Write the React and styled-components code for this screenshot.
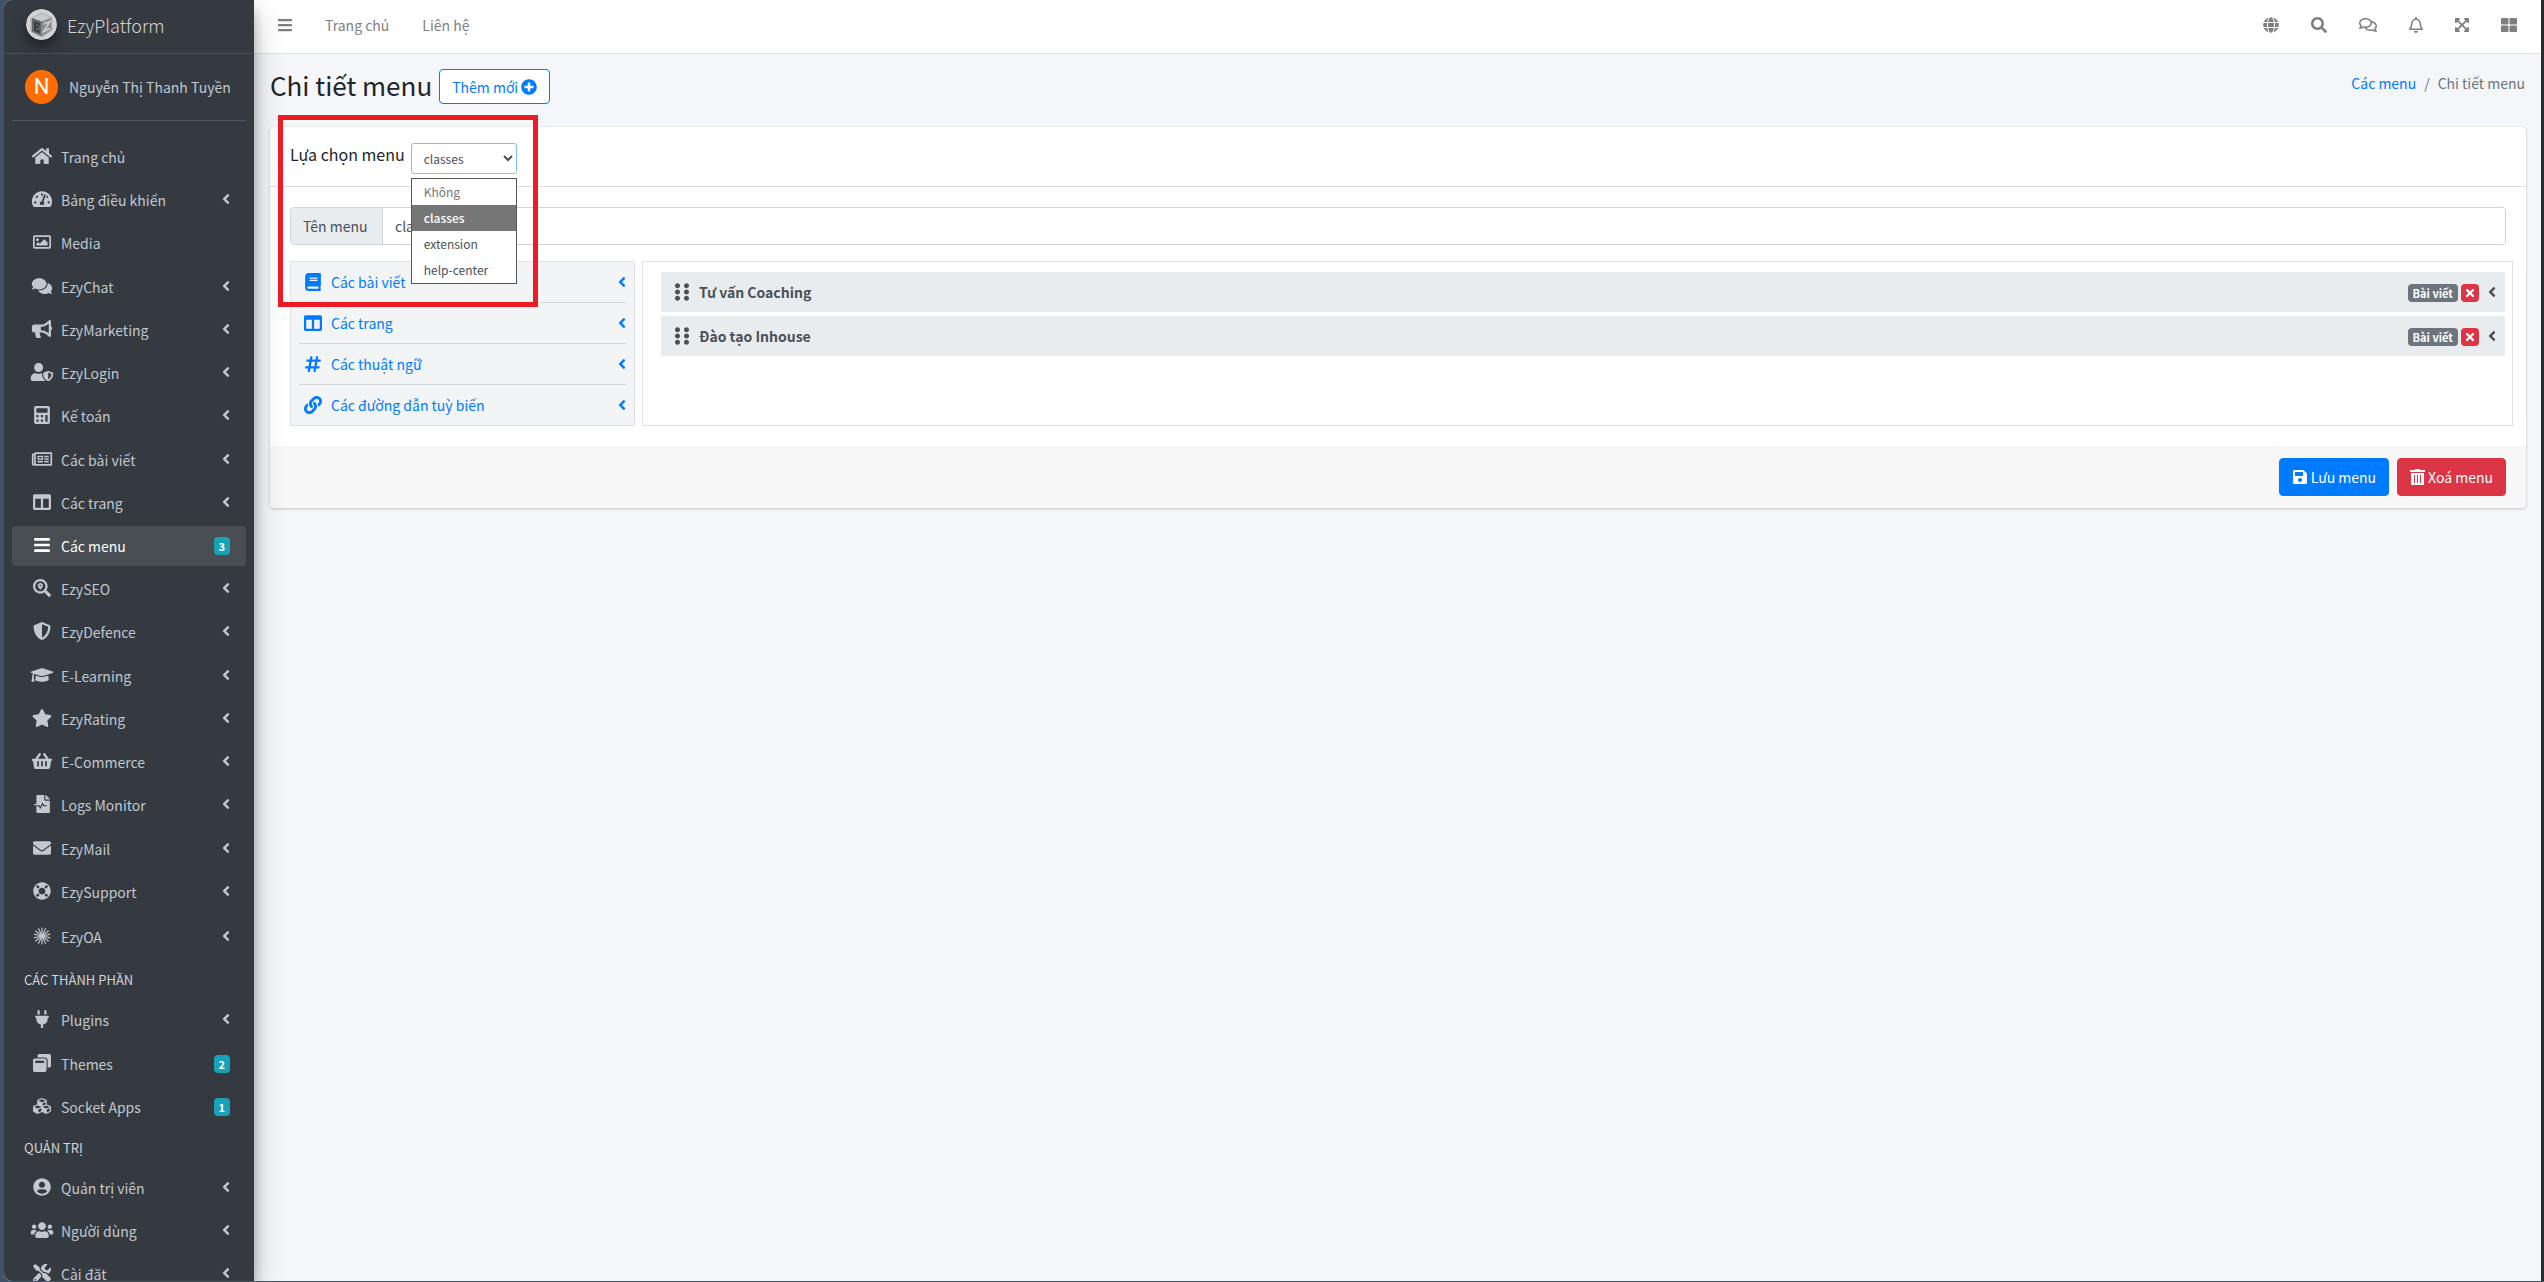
import React from "react";
import styled, { createGlobalStyle, css } from "styled-components";
import {
  FaAngleLeft, FaBars, FaBook, FaBullhorn, FaCalculator, FaColumns, FaComments, FaCubes,
  FaEnvelope, FaExpandArrowsAlt, FaFileMedicalAlt, FaGlobe, FaGraduationCap, FaHashtag,
  FaHome, FaLifeRing, FaLink, FaPlug, FaPlusCircle, FaRegBell, FaRegComments, FaRegImage,
  FaRegNewspaper, FaSave, FaSearch, FaSearchLocation, FaShieldAlt, FaShoppingBasket, FaStar,
  FaTachometerAlt, FaThLarge, FaTimes, FaTools, FaUserCircle, FaUserShield, FaUsers,
  FaWindowRestore, FaEllipsisV,
} from "react-icons/fa";

const GlobalStyle = createGlobalStyle`
  *, *::before, *::after { box-sizing: border-box; }
  html, body, #root { height: 100%; }
  body {
    margin: 0;
    overflow: hidden;
    font-family: "Noto Sans CJK SC", "Noto Sans", sans-serif;
    font-size: 14px;
    line-height: 24px;
    color: #212529;
    background: #40536a;
  }
  a { color: #007bff; text-decoration: none; }
  button, input, select { font: inherit; margin: 0; }
  ul, ol { list-style: none; margin: 0; padding: 0; }
  svg { display: block; flex: none; }
`;

const Frame = styled.div`
  display: flex;
  height: 100%;
  padding: 0 0 1px 4px;
  background: #40536a;
`;

const Window = styled.div`
  display: flex;
  flex: 1;
  min-width: 0;
  overflow: hidden;
  border-right: 3px solid #2b2b2b;
  border-radius: 8px 0 0 8px;
  background: #f4f6f9;
`;

const Sidebar = styled.aside`
  width: 250px;
  flex: none;
  overflow: hidden;
  background: #343a40;
`;

const SidebarShade = styled.div`
  display: flex;
  flex: none;
  z-index: 2;
  box-shadow: 0 14px 28px rgba(0, 0, 0, 0.25), 0 10px 10px rgba(0, 0, 0, 0.22);
`;

const Brand = styled.a`
  display: flex;
  align-items: center;
  gap: 10px;
  height: 54px;
  padding: 0 22px 4px;
  border-bottom: 1px solid #4b545c;
  font-size: 18px;
  font-weight: 300;
  color: rgba(255, 255, 255, 0.8);
`;

const Logo = styled.svg`
  width: 31px;
  height: 31px;
  border-radius: 50%;
  box-shadow: 0 10px 20px rgba(0, 0, 0, 0.19), 0 6px 6px rgba(0, 0, 0, 0.23);
`;

const UserPanel = styled.div`
  display: flex;
  align-items: center;
  gap: 11px;
  height: 67px;
  margin: 0 8px;
  padding-left: 13px;
  border-bottom: 1px solid #4f5962;
`;

const Avatar = styled.span`
  display: grid;
  place-items: center;
  width: 33px;
  height: 34px;
  border-radius: 50%;
  background: #ff6d00;
  color: #fff;
  font-family: Roboto, sans-serif;
  font-size: 22px;
`;

const UserName = styled.a`
  color: #c2c7d0;
  white-space: nowrap;
`;

const Nav = styled.nav`
  padding: 16px 8px 0;
`;

const NavList = styled.ul`
  display: flex;
  flex-direction: column;
  justify-content: space-between;
  height: ${(p) => p.$height}px;
`;

const NavHeader = styled.h2`
  margin: 0;
  padding: 0 12px;
  font-size: 13px;
  font-weight: 400;
  line-height: 41px;
  color: #d0d4db;
`;

const NavLink = styled.a`
  display: flex;
  align-items: center;
  gap: 5px;
  height: ${(p) => (p.$tall ? 44 : 40)}px;
  padding: 0 16px;
  border-radius: 4px;
  color: #c2c7d0;
  ${(p) => p.$active && css`
    background: #494e52;
    color: #fff;
  `}
`;

const NavIcon = styled.span`
  display: grid;
  place-items: center;
  width: 28px;
  height: 26px;
  padding-bottom: 2px;
  svg { width: 28px; height: 18px; }
`;

const NavText = styled.span`
  flex: 1;
`;

const Arrow = styled(FaAngleLeft)`
  width: 8px;
  height: 16px;
`;

const RaisedArrow = styled(Arrow)`
  margin-bottom: 2px;
`;

const Badge = styled.span`
  display: inline-flex;
  align-items: center;
  justify-content: center;
  height: 18px;
  padding: 0 5px;
  border-radius: 4px;
  background: ${(p) => p.$bg || "#17a2b8"};
  color: #fff;
  font-size: 11px;
  font-weight: 700;
  line-height: 18px;
`;

const Main = styled.div`
  flex: 1;
  min-width: 0;
`;

const TopBar = styled.header`
  display: flex;
  align-items: center;
  justify-content: space-between;
  height: 54px;
  padding: 0 24px 3px;
  border-bottom: 1px solid #dee2e6;
  background: #fff;
`;

const TopLinks = styled.nav`
  display: flex;
  align-items: center;
  gap: 33px;
  a { color: #7f7f7f; }
`;

const TopTools = styled.div`
  display: flex;
  align-items: center;
  gap: 32px;
`;

const IconButton = styled.button`
  display: grid;
  place-items: center;
  width: ${(p) => p.$width}px;
  height: 24px;
  padding: 0;
  border: 0;
  background: none;
  color: #7f7f7f;
  svg { width: 100%; height: 16px; }
`;

const PageHead = styled.div`
  display: flex;
  align-items: flex-start;
  justify-content: space-between;
  height: 73px;
  padding: 15px 16px 0;
`;

const TitleGroup = styled.div`
  display: flex;
  align-items: flex-start;
  gap: 7px;
`;

const Title = styled.h1`
  margin: 0;
  font-size: 26px;
  font-weight: 400;
  line-height: 32px;
`;

const Button = styled.button`
  display: inline-flex;
  align-items: center;
  justify-content: center;
  gap: 3px;
  height: ${(p) => (p.$outline ? 35 : 38)}px;
  padding: 0 12px;
  border: 1px solid ${(p) => p.$color};
  border-radius: 4px;
  background: ${(p) => (p.$outline ? "#fff" : p.$color)};
  color: ${(p) => (p.$outline ? p.$color : "#fff")};
  white-space: nowrap;
`;

const Crumbs = styled.ol`
  display: flex;
  gap: 8px;
  padding-top: 2px;
  color: #6c757d;
`;

const Card = styled.section`
  margin: 0 15px 0 16px;
  border-radius: 4px;
  background: #fff;
  box-shadow: 0 0 1px rgba(0, 0, 0, 0.13), 0 1px 3px rgba(0, 0, 0, 0.2);
`;

const CardHeader = styled.div`
  display: flex;
  height: 60px;
  padding: 16px 20px 0;
  border-bottom: 1px solid #dfdfdf;
`;

const Picker = styled.div`
  position: relative;
  display: flex;
  gap: 6px;
  align-items: flex-start;
  label {
    font-size: 16px;
    line-height: 22px;
  }
`;

const SelectWrap = styled.div`
  position: relative;
`;

const Select = styled.select`
  display: block;
  width: 106px;
  height: 31px;
  padding: 0 8px;
  border: 1px solid #80bdff;
  border-radius: 3px;
  background: #fff;
  color: #495057;
  font-size: 12px;
`;

const Options = styled.ul`
  position: absolute;
  top: 35px;
  left: 0;
  z-index: 3;
  width: 100%;
  border: 1px solid #565656;
  background: #fff;
`;

const Option = styled.li`
  padding: 0 12px;
  font-size: 12px;
  line-height: 26px;
  color: ${(p) => (p.$muted ? "#757575" : "#495057")};
  ${(p) => p.$selected && css`
    background: #767676;
    color: #fff;
    font-weight: 500;
  `}
`;

const Highlight = styled.div`
  position: absolute;
  z-index: 4;
  top: -28px;
  left: -12px;
  width: 260px;
  height: 192px;
  border: 5px solid #ed1c24;
  pointer-events: none;
`;

const CardBody = styled.div`
  padding: 20px 13px 20px 20px;
`;

const InputGroup = styled.div`
  display: flex;
  height: 38px;
  margin: 0 7px 16px 0;
  border: 1px solid #ced4da;
  border-radius: 4px;
  overflow: hidden;
  label {
    min-width: 92px;
    padding: 6px 12px;
    border-right: 1px solid #ced4da;
    background: #e9ecef;
    color: #495057;
  }
  input {
    flex: 1;
    min-width: 0;
    padding: 0 12px;
    border: 0;
    background: #fff;
    color: #495057;
    outline: 0;
  }
`;

const Columns = styled.div`
  display: grid;
  grid-template-columns: 345px 1fr;
  gap: 7px;
`;

const Sources = styled.ul`
  padding: 0 8px;
  border: 1px solid #dee2e6;
  background: #f2f4f6;
  li + li { border-top: 1px solid #d3d6d9; }
`;

const Source = styled.a`
  display: flex;
  align-items: center;
  gap: 9px;
  height: 40px;
  padding-left: 4px;
`;

const SourceIcon = styled.span`
  display: grid;
  place-items: center;
  width: 19px;
  font-size: 18px;
`;

const Items = styled.ul`
  display: flex;
  flex-direction: column;
  gap: 4px;
  padding: 10px 7px 10px 18px;
  border: 1px solid #dee2e6;
`;

const Item = styled.li`
  display: flex;
  align-items: center;
  height: 40px;
  padding: 0 9px 0 13px;
  background: #e9ecef;
  color: #495057;
`;

const Grip = styled.span`
  display: flex;
  gap: 2px;
  margin-right: 9px;
  svg { width: 7px; height: 18px; }
`;

const ItemName = styled.strong`
  flex: 1;
  font-weight: 700;
`;

const ItemTools = styled.div`
  display: flex;
  align-items: center;
  gap: 3px;
  padding-top: 2px;
`;

const RemoveButton = styled.button`
  display: grid;
  place-items: center;
  width: 18px;
  height: 18px;
  padding: 0;
  border: 0;
  border-radius: 4px;
  background: #dc3545;
  color: #fff;
  font-size: 12px;
`;

const ToggleButton = styled.button`
  padding: 0 0 0 6px;
  border: 0;
  background: none;
  color: #495057;
`;

const CardFooter = styled.div`
  display: flex;
  justify-content: flex-end;
  gap: 8px;
  padding: 12px 20px;
  border-radius: 0 0 4px 4px;
  background: #f7f7f7;
`;

const BurstIcon = () => (
  <svg viewBox="0 0 36 36" stroke="currentColor" strokeWidth="2.4">
    {Array.from({ length: 14 }, (_, i) => {
      const a = (i * Math.PI) / 7 + Math.PI / 2;
      return (
        <line key={i} x1="18" y1="18" x2={18 + 17 * Math.cos(a)} y2={18 + 17 * Math.sin(a)} />
      );
    })}
  </svg>
);

const TrashIcon = () => (
  <svg width="15" height="16" viewBox="0 0 15 16" fill="currentColor" fillRule="evenodd">
    <path d="M5 0h5v1h5v2H0V1h5zM1 4h13v12H1zM4 6v8h1V6zM7 6v8h1V6zM10 6v8h1V6z" />
  </svg>
);

const BrandLogo = () => (
  <Logo viewBox="0 0 62 62" aria-hidden="true">
    <circle cx="31" cy="31" r="31" fill="#d2d3d4" />
    <path d="M9 18 32 7 53 17 53 42 32 57 9 46z" fill="#a9abad" />
    <path d="M12 18 33 9 50 18 31 25z" fill="#c9cacb" />
    <path d="M12 18 31 25V54L12 45z" fill="#63666a" />
    <path d="M31 25 50 18V42L31 54z" fill="#85888a" />
    <path d="M28 31 18 27V42L28 46M18 34 26 37" fill="none" stroke="#3d4043" strokeWidth="4" />
    <path d="M35 30 48 25 35 45 48 39" fill="none" stroke="#c3c5c6" strokeWidth="4" />
  </Logo>
);

const mainNav = [
  ["Trang chủ", FaHome, "none"],
  ["Bảng điều khiển", FaTachometerAlt],
  ["Media", FaRegImage, "none"],
  ["EzyChat", FaComments],
  ["EzyMarketing", FaBullhorn],
  ["EzyLogin", FaUserShield],
  ["Kế toán", FaCalculator],
  ["Các bài viết", FaRegNewspaper],
  ["Các trang", FaColumns],
  ["Các menu", FaBars, "3"],
  ["EzySEO", FaSearchLocation],
  ["EzyDefence", FaShieldAlt],
  ["E-Learning", FaGraduationCap],
  ["EzyRating", FaStar],
  ["E-Commerce", FaShoppingBasket],
  ["Logs Monitor", FaFileMedicalAlt],
  ["EzyMail", FaEnvelope],
  ["EzySupport", FaLifeRing],
  ["EzyOA", BurstIcon],
];
const partsNav = [
  ["Plugins", FaPlug],
  ["Themes", FaWindowRestore, "2"],
  ["Socket Apps", FaCubes, "1"],
];
const adminNav = [
  ["Quản trị viên", FaUserCircle],
  ["Người dùng", FaUsers],
  ["Cài đặt", FaTools],
];
const sources = [
  ["Các bài viết", FaBook],
  ["Các trang", FaColumns],
  ["Các thuật ngữ", FaHashtag],
  ["Các đường dẫn tuỳ biến", FaLink],
];
const tools = [
  ["Ngôn ngữ", FaGlobe, 16],
  ["Tìm kiếm", FaSearch, 16],
  ["Tin nhắn", FaRegComments, 18],
  ["Thông báo", FaRegBell, 14],
  ["Toàn màn hình", FaExpandArrowsAlt, 14],
  ["Ứng dụng", FaThLarge, 16],
];

function NavGroup({ items, height }) {
  return (
    <NavList $height={height}>
      {items.map(([label, Icon, end]) => (
        <li key={label}>
          <NavLink href="#" $active={label === "Các menu"} $tall={label === "EzyOA"}>
            <NavIcon><Icon /></NavIcon>
            <NavText>{label}</NavText>
            {end === undefined && <RaisedArrow />}
            {end && end !== "none" && <Badge>{end}</Badge>}
          </NavLink>
        </li>
      ))}
    </NavList>
  );
}

export default function App() {
  return (
    <Frame>
      <GlobalStyle />
      <Window>
        <SidebarShade>
          <Sidebar>
            <Brand href="#"><BrandLogo />EzyPlatform</Brand>
            <UserPanel>
              <Avatar>N</Avatar>
              <UserName href="#">Nguyễn Thị Thanh Tuyền</UserName>
            </UserPanel>
            <Nav>
              <NavGroup items={mainNav} height={822} />
              <NavHeader>CÁC THÀNH PHẦN</NavHeader>
              <NavGroup items={partsNav} height={127} />
              <NavHeader>QUẢN TRỊ</NavHeader>
              <NavGroup items={adminNav} height={126} />
            </Nav>
          </Sidebar>
        </SidebarShade>
        <Main>
          <TopBar>
            <TopLinks>
              <IconButton $width={14} aria-label="Menu"><FaBars /></IconButton>
              <a href="#">Trang chủ</a>
              <a href="#">Liên hệ</a>
            </TopLinks>
            <TopTools>
              {tools.map(([label, Icon, width]) => (
                <IconButton key={label} $width={width} aria-label={label}><Icon /></IconButton>
              ))}
            </TopTools>
          </TopBar>
          <PageHead>
            <TitleGroup>
              <Title>Chi tiết menu</Title>
              <Button $outline $color="#007bff">Thêm mới <FaPlusCircle size={16} /></Button>
            </TitleGroup>
            <Crumbs>
              <li><a href="#">Các menu</a></li>
              <li>/</li>
              <li>Chi tiết menu</li>
            </Crumbs>
          </PageHead>
          <Card>
            <CardHeader>
              <Picker>
                <label htmlFor="menu-select">Lựa chọn menu</label>
                <SelectWrap>
                  <Select id="menu-select" defaultValue="classes">
                    <option disabled>Không</option>
                    <option>classes</option>
                    <option>extension</option>
                    <option>help-center</option>
                  </Select>
                  <Options>
                    <Option $muted>Không</Option>
                    <Option $selected>classes</Option>
                    <Option>extension</Option>
                    <Option>help-center</Option>
                  </Options>
                </SelectWrap>
                <Highlight />
              </Picker>
            </CardHeader>
            <CardBody>
              <InputGroup>
                <label htmlFor="menu-name">Tên menu</label>
                <input id="menu-name" defaultValue="classes" />
              </InputGroup>
              <Columns>
                <Sources>
                  {sources.map(([label, Icon]) => (
                    <li key={label}>
                      <Source href="#">
                        <SourceIcon><Icon /></SourceIcon>
                        <NavText>{label}</NavText>
                        <Arrow />
                      </Source>
                    </li>
                  ))}
                </Sources>
                <Items>
                  {["Tư vấn Coaching", "Đào tạo Inhouse"].map((name) => (
                    <Item key={name}>
                      <Grip><FaEllipsisV /><FaEllipsisV /></Grip>
                      <ItemName>{name}</ItemName>
                      <ItemTools>
                        <Badge $bg="#6c757d">Bài viết</Badge>
                        <RemoveButton aria-label="Xoá"><FaTimes /></RemoveButton>
                        <ToggleButton aria-label="Mở"><RaisedArrow /></ToggleButton>
                      </ItemTools>
                    </Item>
                  ))}
                </Items>
              </Columns>
            </CardBody>
            <CardFooter>
              <Button $color="#007bff"><FaSave size={16} />Lưu menu</Button>
              <Button $color="#dc3545"><TrashIcon />Xoá menu</Button>
            </CardFooter>
          </Card>
        </Main>
      </Window>
    </Frame>
  );
}
